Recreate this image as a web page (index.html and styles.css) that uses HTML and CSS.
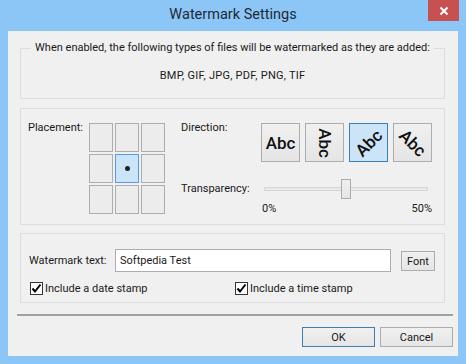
FILE: index.html
```html
<!DOCTYPE html>
<html lang="en">
<head>
    <meta charset="UTF-8">
    <title>Watermark Settings</title>
    <link rel="stylesheet" href="styles.css">
</head>
<body>

<div class="window">
    <div class="titlebar">
        <span class="title">Watermark Settings</span>
        <span class="close">
            <svg width="10" height="10" viewBox="0 0 10 10"><path d="M1.5 1.5 L8.5 8.5 M8.5 1.5 L1.5 8.5" stroke="#fff" stroke-width="2"/></svg>
        </span>
    </div>

    <div class="client">
        <div class="group group-types">
            <div class="caption">When enabled, the following types of files will be watermarked as they are added:</div>
            <div class="types">BMP, GIF, JPG, PDF, PNG, TIF</div>
        </div>

        <div class="group group-layout">
            <div class="placement">
                <span class="label placement-label">Placement:</span>
                <div class="cells">
                    <span class="cell"></span><span class="cell"></span><span class="cell"></span>
                    <span class="cell"></span><span class="cell selected"><i class="dot"></i></span><span class="cell"></span>
                    <span class="cell"></span><span class="cell"></span><span class="cell"></span>
                </div>
            </div>

            <div class="settings">
                <div class="direction-row">
                    <span class="label direction-label">Direction:</span>
                    <div class="directions">
                        <button class="dir"><span class="abc">Abc</span></button>
                        <button class="dir"><span class="abc rot-down">Abc</span></button>
                        <button class="dir selected"><span class="abc rot-up">Abc</span></button>
                        <button class="dir"><span class="abc rot-diag">Abc</span></button>
                    </div>
                </div>
                <div class="slider-row">
                    <span class="label slider-label">Transparency:</span>
                    <div class="track"><span class="thumb"></span></div>
                </div>
                <div class="percent-row">
                    <span>0%</span>
                    <span>50%</span>
                </div>
            </div>
        </div>

        <div class="group group-text">
            <div class="text-row">
                <span class="label text-label">Watermark text:</span>
                <div class="textbox">Softpedia Test</div>
                <button class="btn font-btn">Font</button>
            </div>
            <div class="check-row">
                <span class="check-item">
                    <span class="checkbox"><svg width="11" height="11" viewBox="0 0 11 11"><path d="M1.5 5.5 L4 8.5 L9.5 1.5" fill="none" stroke="#000" stroke-width="2"/></svg></span>
                    Include a date stamp
                </span>
                <span class="check-item">
                    <span class="checkbox"><svg width="11" height="11" viewBox="0 0 11 11"><path d="M1.5 5.5 L4 8.5 L9.5 1.5" fill="none" stroke="#000" stroke-width="2"/></svg></span>
                    Include a time stamp
                </span>
            </div>
        </div>

        <div class="separator"></div>

        <div class="buttons">
            <button class="btn btn-ok">OK</button>
            <button class="btn">Cancel</button>
        </div>
    </div>
</div>

</body>
</html>
```

FILE: styles.css
```css
body { margin: 0; font-family: Roboto, "Liberation Sans", sans-serif; font-size: 11px; color: #1a1a1a; }
.window { width: 466px; height: 364px; background: #8cc6f7; display: flex; flex-direction: column; }
.titlebar { height: 31px; position: relative; text-align: center; }
.title { font-size: 14.5px; line-height: 30px; color: #1e2a36; }
.close { position: absolute; top: 0; left: 428px; width: 31px; height: 21px; background: #c75050; display: flex; align-items: center; justify-content: center; }
.close svg { display: block; }

.client { flex: 1; margin: 0 8px 8px; background: #f0f0f0; padding: 17px 0 0 12px; }
.group { width: 425px; box-sizing: border-box; border: 1px solid #dcdcdc; }
.label { line-height: 16px; white-space: nowrap; }

.group-types { height: 51px; }
.caption { display: table; margin: -9px auto 0; padding: 0 4px; background: #f0f0f0; line-height: 16px; white-space: nowrap; }
.types { text-align: center; line-height: 16px; margin-top: 12px; letter-spacing: 0.25px; }

.group-layout { height: 117px; margin-top: 9px; padding: 14px 0 0 7px; display: flex; align-items: flex-start; }
.placement { display: flex; align-items: flex-start; }
.placement-label { width: 61px; margin-top: -3px; }
.cells { display: grid; grid-template-columns: repeat(3, 24px); grid-auto-rows: 29px; gap: 2px; }
.cell { box-sizing: border-box; border: 1px solid #adadad; background: #ececec; display: flex; align-items: center; justify-content: center; }
.cell.selected { background: #cce4f7; border-color: #569de5; }
.dot { width: 5px; height: 5px; border-radius: 50%; background: #222; }

.settings { margin-left: 16px; }
.direction-row { display: flex; align-items: flex-start; }
.direction-label { width: 80px; margin-top: -3px; }
.directions { display: flex; gap: 5px; }
.dir { width: 39px; height: 39px; padding: 0; border: 1px solid #adadad; background: linear-gradient(#f0f0f0, #e5e5e5); display: flex; align-items: center; justify-content: center; overflow: hidden; font-family: inherit; }
.dir.selected { background: #cce4f7; border-color: #3c7fb1; }
.abc { display: block; font-size: 17px; font-weight: 500; color: #111; line-height: 20px; }
.rot-down { transform: rotate(90deg); }
.rot-up { transform: rotate(-45deg); }
.rot-diag { transform: rotate(45deg); }

.slider-row { display: flex; align-items: center; height: 20px; margin-top: 17px; }
.slider-label { width: 83px; }
.track { position: relative; width: 164px; height: 4px; box-sizing: border-box; border: 1px solid #d6d6d6; background: #e7eaea; }
.thumb { position: absolute; left: 76px; top: -9px; width: 10px; height: 20px; box-sizing: border-box; border: 1px solid #acacac; background: linear-gradient(#f0f0f0, #e5e5e5); }
.percent-row { display: flex; justify-content: space-between; width: 170px; margin: 2px 0 0 81px; line-height: 16px; }

.group-text { height: 70px; margin-top: 8px; padding: 15px 0 0 8px; }
.text-row { display: flex; align-items: center; }
.text-label { width: 86px; }
.textbox { width: 276px; height: 23px; box-sizing: border-box; border: 1px solid #abadb3; background: #fff; padding-left: 4px; line-height: 21px; }
.btn { height: 20px; padding: 0; border: 1px solid #acacac; background: linear-gradient(#f0f0f0, #e5e5e5); font-family: inherit; font-size: 11px; color: #1a1a1a; }
.font-btn { width: 34px; margin-left: 10px; margin-top: 1px; }
.check-row { display: flex; margin: 10px 0 0 1px; line-height: 13px; }
.check-item { display: flex; align-items: center; gap: 2px; width: 205px; }
.checkbox { width: 13px; height: 13px; box-sizing: border-box; border: 1px solid #333; background: #fff; display: flex; align-items: center; justify-content: center; }

.separator { width: 436px; height: 2px; background: #a0a0a0; margin: 11px 0 0 -3px; }
.buttons { display: flex; justify-content: flex-end; gap: 5px; margin: 11px 5px 0 0; }
.buttons .btn { width: 73px; }
.btn-ok { border-color: #3c7fb1; }
```
